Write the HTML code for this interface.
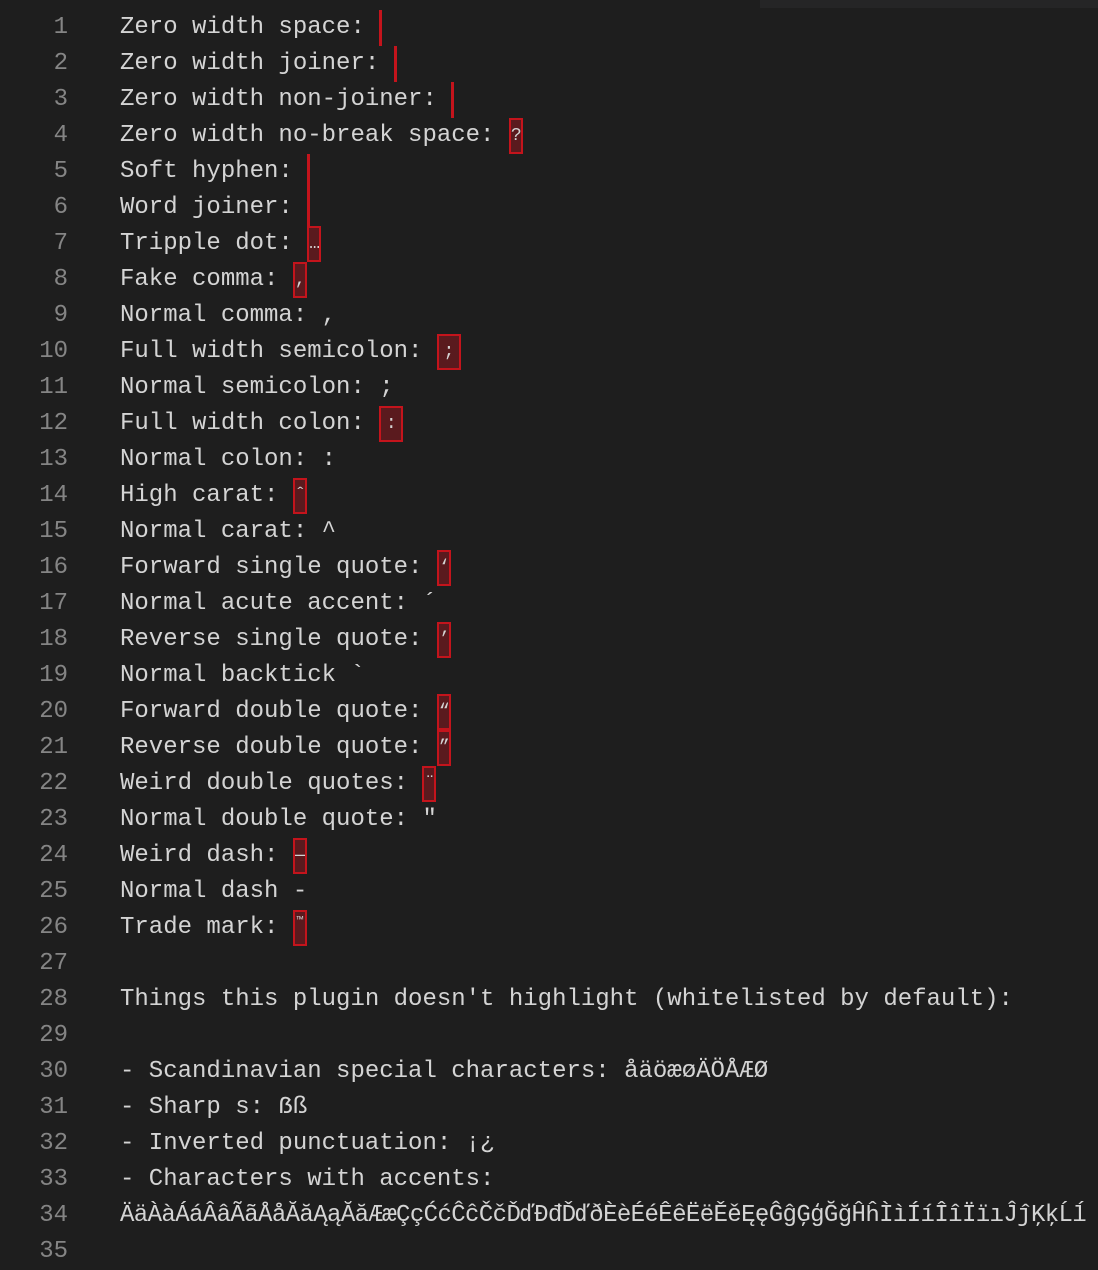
<!DOCTYPE html>
<html><head><meta charset="utf-8"><style>
html,body{margin:0;padding:0;background:#1e1e1e;width:1098px;height:1242px;overflow:hidden}
.top{position:absolute;left:760px;top:0;width:338px;height:8px;background:#252526}
.ed{position:absolute;top:10px;left:0;width:1098px;font-family:"Liberation Mono","DejaVu Sans Mono",monospace;font-size:24px;color:#d4d4d4}
.l{height:36px;line-height:36px;white-space:pre;position:relative}
.n{position:absolute;left:0;width:68px;text-align:right;color:#858585}
.t{position:absolute;left:120px}
.bar{display:inline-block;width:3px;height:36px;background:#c4141c;vertical-align:top}
.box{display:inline-block;width:10px;height:32px;border:2px solid #c4141c;background:#5a1a1e;vertical-align:top;line-height:32px;font-size:18px;text-align:center;overflow:hidden}
</style></head><body>
<div class="top"></div>
<div class="ed">
<div class="l"><span class="n">1</span><span class="t">Zero width space: <span class="bar"></span></span></div>
<div class="l"><span class="n">2</span><span class="t">Zero width joiner: <span class="bar"></span></span></div>
<div class="l"><span class="n">3</span><span class="t">Zero width non-joiner: <span class="bar"></span></span></div>
<div class="l"><span class="n">4</span><span class="t">Zero width no-break space: <span class="box">?</span></span></div>
<div class="l"><span class="n">5</span><span class="t">Soft hyphen: <span class="bar"></span></span></div>
<div class="l"><span class="n">6</span><span class="t">Word joiner: <span class="bar"></span></span></div>
<div class="l"><span class="n">7</span><span class="t">Tripple dot: <span class="box">…</span></span></div>
<div class="l"><span class="n">8</span><span class="t">Fake comma: <span class="box">,</span></span></div>
<div class="l"><span class="n">9</span><span class="t">Normal comma: ,</span></div>
<div class="l"><span class="n">10</span><span class="t">Full width semicolon: <span class="box" style="width:20px">;</span></span></div>
<div class="l"><span class="n">11</span><span class="t">Normal semicolon: ;</span></div>
<div class="l"><span class="n">12</span><span class="t">Full width colon: <span class="box" style="width:20px">:</span></span></div>
<div class="l"><span class="n">13</span><span class="t">Normal colon: :</span></div>
<div class="l"><span class="n">14</span><span class="t">High carat: <span class="box">ˆ</span></span></div>
<div class="l"><span class="n">15</span><span class="t">Normal carat: ^</span></div>
<div class="l"><span class="n">16</span><span class="t">Forward single quote: <span class="box">‘</span></span></div>
<div class="l"><span class="n">17</span><span class="t">Normal acute accent: ´</span></div>
<div class="l"><span class="n">18</span><span class="t">Reverse single quote: <span class="box">’</span></span></div>
<div class="l"><span class="n">19</span><span class="t">Normal backtick `</span></div>
<div class="l"><span class="n">20</span><span class="t">Forward double quote: <span class="box">“</span></span></div>
<div class="l"><span class="n">21</span><span class="t">Reverse double quote: <span class="box">”</span></span></div>
<div class="l"><span class="n">22</span><span class="t">Weird double quotes: <span class="box">¨</span></span></div>
<div class="l"><span class="n">23</span><span class="t">Normal double quote: "</span></div>
<div class="l"><span class="n">24</span><span class="t">Weird dash: <span class="box">—</span></span></div>
<div class="l"><span class="n">25</span><span class="t">Normal dash -</span></div>
<div class="l"><span class="n">26</span><span class="t">Trade mark: <span class="box" style="font-size:11px;line-height:20px">™</span></span></div>
<div class="l"><span class="n">27</span></div>
<div class="l"><span class="n">28</span><span class="t">Things this plugin doesn't highlight (whitelisted by default):</span></div>
<div class="l"><span class="n">29</span></div>
<div class="l"><span class="n">30</span><span class="t">- Scandinavian special characters: åäöæøÄÖÅÆØ</span></div>
<div class="l"><span class="n">31</span><span class="t">- Sharp s: ẞß</span></div>
<div class="l"><span class="n">32</span><span class="t">- Inverted punctuation: ¡¿</span></div>
<div class="l"><span class="n">33</span><span class="t">- Characters with accents:</span></div>
<div class="l"><span class="n">34</span><span class="t" style="letter-spacing:-0.6px">ÄäÀàÁáÂâÃãÅåĂăĄąĂăÆæÇçĆćĈĉČčĎďĐđĎďðÈèÉéÊêËëĚěĘęĜĝĢģĞğĤĥÌìÍíÎîÏïıĴĵĶķĹĺ</span></div>
<div class="l"><span class="n">35</span></div>
</div>
</body></html>
